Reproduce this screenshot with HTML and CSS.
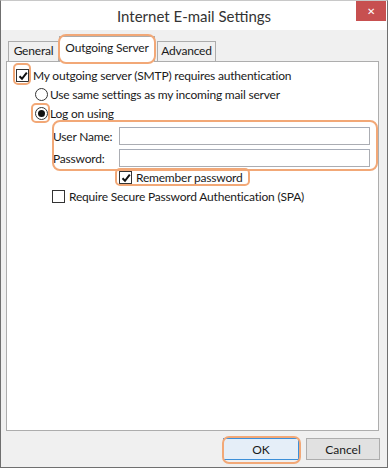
FILE: index.html
```html
<!DOCTYPE html>
<html>
<head>
  <title>Internet E-mail Settings</title>
  <meta charset="UTF-8" />
  <link rel="stylesheet" href="styles.css">
</head>
<body>
  <div class="window">
    <div class="titlebar">
      <span></span>
      <div class="title">Internet E-mail Settings</div>
      <div class="close">&#x2715;</div>
    </div>

    <div class="content">
      <!-- Tabs -->
      <div class="tabs">
        <div class="tab tab-general">General</div>
        <div class="tab active hl hl-tab">Outgoing Server</div>
        <div class="tab tab-advanced">Advanced</div>
      </div>

      <!-- Outgoing Server page -->
      <div class="panel">
        <label class="row">
          <span class="check checked hl hl-check1">
            <svg width="10" height="10" viewBox="0 0 10 10"><path d="M1.5 5.2 L4 7.8 L8.8 1.6" fill="none" stroke="#111" stroke-width="2"/></svg>
          </span>
          My outgoing server (SMTP) requires authentication
        </label>

        <label class="row indent-1">
          <span class="radio"></span>
          Use same settings as my incoming mail server
        </label>

        <label class="row indent-1">
          <span class="radio selected hl hl-radio"></span>
          Log on using
        </label>

        <div class="fields hl hl-fields">
          <div class="field">
            <span class="field-label">User Name:</span>
            <span class="input"></span>
          </div>
          <div class="field">
            <span class="field-label">Password:</span>
            <span class="input"></span>
          </div>
        </div>

        <div class="row remember">
          <label class="remember-box hl hl-remember">
            <span class="check checked">
              <svg width="10" height="10" viewBox="0 0 10 10"><path d="M1.5 5.2 L4 7.8 L8.8 1.6" fill="none" stroke="#111" stroke-width="2"/></svg>
            </span>
            Remember password
          </label>
        </div>

        <label class="row indent-2">
          <span class="check"></span>
          Require Secure Password Authentication (SPA)
        </label>
      </div>
    </div>

    <div class="footer">
      <button class="btn default hl hl-ok">OK</button>
      <button class="btn">Cancel</button>
    </div>
  </div>
</body>
</html>
```

FILE: styles.css
```css
* {
  box-sizing: border-box;
}

body {
  margin: 0;
  font-family: Lato, "Open Sans", sans-serif;
  font-size: 12px;
  letter-spacing: -0.2px;
  color: #1a1a1a;
  background: #fff;
}

.window {
  width: 388px;
  height: 468px;
  background: #f0f0f0;
  border: 1px solid #6f6f6f;
  border-top-color: #c8c8c8;
  display: flex;
  flex-direction: column;
}

/* Title bar */
.titlebar {
  height: 29px;
  background: #fff;
  display: grid;
  grid-template-columns: 1fr auto 1fr;
}

.title {
  font-size: 15px;
  color: #333;
  padding-top: 6px;
  letter-spacing: 0;
}

.close {
  justify-self: end;
  width: 30px;
  height: 20px;
  margin-right: 1px;
  background: #c75050;
  color: #fff;
  font-size: 10px;
  text-align: center;
  line-height: 20px;
  letter-spacing: 0;
}

/* Tabs */
.content {
  padding: 0 8px 0 5px;
}

.tabs {
  display: flex;
  align-items: flex-end;
  height: 31px;
  padding-left: 2px;
}

.tab {
  height: 20px;
  line-height: 18px;
  text-align: center;
  border: 1px solid #acacac;
  border-bottom: none;
  background: #f0f0f0;
}

.tab-general {
  width: 51px;
}

.tab-advanced {
  width: 59px;
}

.tab.active {
  width: 96px;
  height: 26px;
  margin-bottom: -1px;
  margin-right: 2px;
  padding-top: 2px;
  background: #fff;
  position: relative;
  z-index: 1;
}

.panel {
  height: 370px;
  background: #fff;
  border: 1px solid #adadad;
  padding-top: 4px;
  display: flex;
  flex-direction: column;
}

/* Rows */
.row {
  height: 19px;
  display: flex;
  align-items: center;
  padding-left: 9px;
}

.indent-1 {
  padding-left: 28px;
}

.indent-2 {
  padding-left: 45px;
}

.check {
  width: 13px;
  height: 13px;
  border: 1px solid #333;
  background: #fff;
  margin-right: 4px;
  display: flex;
  align-items: center;
  justify-content: center;
  flex: none;
}

.radio {
  width: 13px;
  height: 13px;
  border: 1px solid #333;
  border-radius: 50%;
  background: #fff;
  margin-right: 2px;
  flex: none;
  display: flex;
  align-items: center;
  justify-content: center;
}

.radio.selected::before {
  content: "";
  width: 7px;
  height: 7px;
  border-radius: 50%;
  background: #111;
}

/* User name / password */
.fields {
  margin-left: 45px;
  width: 319px;
  padding-top: 2px;
}

.field {
  height: 22px;
  display: flex;
  align-items: center;
  padding-left: 1px;
}

.field-label {
  width: 66px;
}

.input {
  width: 251px;
  height: 18px;
  border: 1px solid #abadb3;
  border-top-color: #a6acb8;
  background: #fff;
}

.remember {
  padding-left: 112px;
  margin-top: -1px;
}

.remember-box {
  display: flex;
  align-items: center;
}

/* Footer */
.footer {
  display: flex;
  justify-content: flex-end;
  gap: 7px;
  padding: 7px 7px 0 0;
}

.btn {
  height: 22px;
  width: 74px;
  font-family: Lato, "Open Sans", sans-serif;
  font-size: 12px;
  color: #1a1a1a;
  background: #e1e1e1;
  border: 1px solid #adadad;
  padding: 0;
}

.btn.default {
  width: 76px;
  border-color: #3c8fd9;
  background: #e5eef8;
}

/* Orange highlight markers */
.hl {
  position: relative;
}

.hl::after {
  content: "";
  position: absolute;
  border: 2px solid #f2a877;
  border-radius: 7px;
  pointer-events: none;
}

.hl-tab::after {
  inset: -3px -2px -2px -2px;
  border-radius: 8px;
}

.hl-check1::after {
  inset: -7px -3px -4px -4px;
  border-radius: 5px;
}

.hl-radio::after {
  inset: -5px -3px -4px -5px;
  border-radius: 5px;
}

.hl-fields::after {
  inset: -3px -7px -2px 0;
  border-radius: 8px;
}

.hl-remember::after {
  inset: -2px -8px -1px -4px;
  border-radius: 5px;
}

.hl-ok::after {
  inset: -3px -3px -5px -2px;
  border-radius: 7px;
}
```
